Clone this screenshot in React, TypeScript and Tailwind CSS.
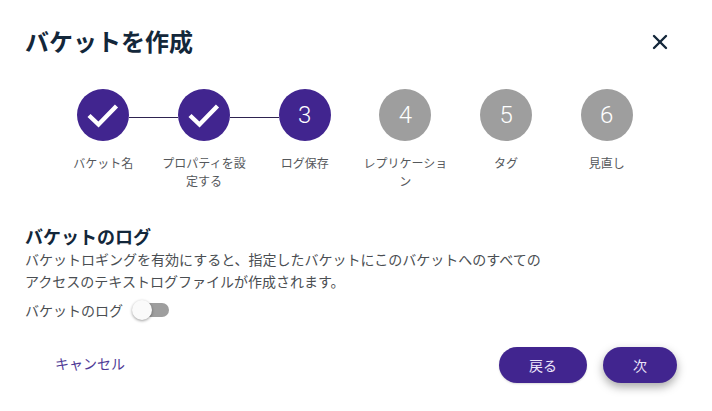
import { X } from "lucide-react";

const steps = [
  { n: "1", label: "バケット名", state: "done" },
  { n: "2", label: "プロパティを設定する", state: "done" },
  { n: "3", label: "ログ保存", state: "active" },
  { n: "4", label: "レプリケーション", state: "todo" },
  { n: "5", label: "タグ", state: "todo" },
  { n: "6", label: "見直し", state: "todo" },
];

function Check() {
  return (
    <svg width="32" height="26" viewBox="0 0 32 26" fill="none">
      <path d="M2 13.5 L11.5 22.5 L29.5 4" stroke="#fff" strokeWidth="4.4" />
    </svg>
  );
}

export default function App() {
  return (
    <div
      className="w-[712px] h-[411px] bg-white overflow-hidden flex flex-col text-[#3a3f44]"
      style={{ fontFamily: '"Noto Sans CJK JP", Roboto, sans-serif' }}
    >
      <header className="flex items-center justify-between pl-[25px] pr-[40px] pt-[24px] h-[60px]">
        <h1 className="text-[24px] leading-[36px] font-bold text-[#13273a] mb-[2px]">バケットを作成</h1>
        <X className="w-[24px] h-[24px] text-[#13273a]" strokeWidth={2.4} />
      </header>
      <ol className="flex pl-[53px] pt-[29px] w-[657px]">
        {steps.map((s, i) => (
          <li key={s.n} className="flex-1 flex flex-col items-center">
            <div className="flex items-center w-full">
              <span className={`flex-1 h-px mt-[4px] ${i > 0 && i < 3 ? "bg-[#2e2350]" : ""}`} />
              <span
                className={`w-[52px] h-[52px] rounded-full flex items-center justify-center text-white text-[24px] font-light ${
                  s.state === "todo" ? "bg-[#9e9e9e]" : "bg-[#41258f]"
                }`}
                style={{ fontFamily: "Roboto, sans-serif" }}
              >
                {s.state === "done" ? <Check /> : s.n}
              </span>
              <span className={`flex-1 h-px mt-[4px] ${i < 2 ? "bg-[#2e2350]" : ""}`} />
            </div>
            <p className="mt-[13px] w-[88px] text-center text-[12px] leading-[18px] text-[#55585c]">{s.label}</p>
          </li>
        ))}
      </ol>
      <section className="pl-[25px] w-[545px] mt-[35px]">
        <h2 className="text-[18px] leading-[22px] font-bold text-[#13273a]">バケットのログ</h2>
        <p className="text-[14px] leading-[22px] mt-[1px] text-[#4a4e52]">
          バケットロギングを有効にすると、指定したバケットにこのバケットへのすべてのアクセスのテキストログファイルが作成されます。
        </p>
        <div className="flex items-center mt-[6px] h-[24px]">
          <span className="text-[14px] leading-[21px] text-[#4a4e52]">バケットのログ</span>
          <span className="relative ml-[11px] w-[35px] h-[14px] rounded-full bg-[#9e9e9e]">
            <span className="absolute left-[-2px] top-[-3px] w-[20px] h-[20px] rounded-full bg-[#fafafa] shadow-[0_1px_3px_rgba(0,0,0,0.4)]" />
          </span>
        </div>
      </section>
      <footer className="flex items-center pl-[55px] pr-[35px] mt-[25px]">
        <button className="text-[14px] text-[#4f3a96] mb-[3px]">キャンセル</button>
        <button className="ml-auto w-[88px] h-[36px] rounded-full bg-[#41258f] text-[#ece6fa] text-[14px] shadow-[0_1px_2px_rgba(0,0,0,0.15)]">
          戻る
        </button>
        <button className="ml-[16px] w-[74px] h-[36px] rounded-full bg-[#41258f] text-[#ece6fa] text-[14px] shadow-[0_4px_10px_rgba(0,0,0,0.35)]">
          次
        </button>
      </footer>
    </div>
  );
}
